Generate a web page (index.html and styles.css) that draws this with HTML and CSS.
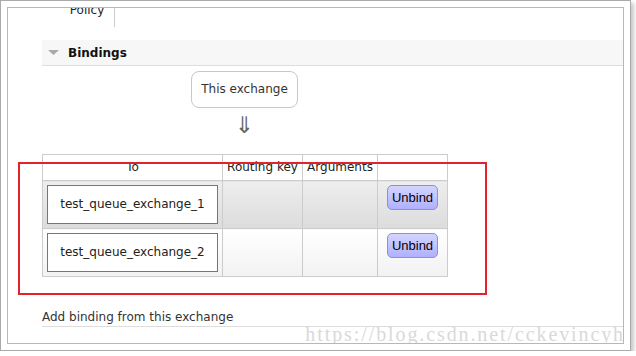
FILE: index.html
```html
<!DOCTYPE html>
<html lang="en">
<head>
    <meta charset="UTF-8">
    <title>Exchange bindings</title>
    <link rel="stylesheet" href="styles.css">
</head>
<body>
    <div class="shot">
        <div class="window">
            <div class="tab">Policy</div>

            <div class="section">
                <h2 class="section-head">
                    <svg class="toggle" width="11" height="5" viewBox="0 0 11 5"><polygon points="0,0 11,0 5.5,5" fill="#aaa"/></svg>
                    Bindings
                </h2>

                <div class="bindings">
                    <div class="diagram">
                        <span class="node">This exchange</span>
                        <span class="arrow">⇓</span>
                    </div>

                    <table class="list">
                        <colgroup>
                            <col class="col-to">
                            <col class="col-key">
                            <col class="col-args">
                            <col class="col-act">
                        </colgroup>
                        <thead>
                            <tr>
                                <th>To</th>
                                <th>Routing key</th>
                                <th>Arguments</th>
                                <th></th>
                            </tr>
                        </thead>
                        <tbody>
                            <tr class="alt1">
                                <td><span class="queue">test_queue_exchange_1</span></td>
                                <td></td>
                                <td></td>
                                <td class="action"><button class="unbind">Unbind</button></td>
                            </tr>
                            <tr class="alt2">
                                <td><span class="queue">test_queue_exchange_2</span></td>
                                <td></td>
                                <td></td>
                                <td class="action"><button class="unbind">Unbind</button></td>
                            </tr>
                        </tbody>
                    </table>
                </div>

                <h3 class="add-binding">Add binding from this exchange</h3>
            </div>

            <!-- annotation drawn over the screenshot -->
            <div class="mark"></div>
            <div class="watermark">https://blog.csdn.net/cckevincyh</div>
        </div>
    </div>
</body>
</html>
```

FILE: styles.css
```css
body {
    margin: 0;
    background: #fff;
    font-family: 'DejaVu Sans', Verdana, sans-serif;
    font-size: 12px;
    color: #222;
}
.shot {
    width: 617px;
    height: 337px;
    padding: 6px;
    border: 1px solid #aaa;
    box-shadow: 3px 3px 4px rgba(0, 0, 0, 0.22);
}
.window {
    position: relative;
    box-sizing: border-box;
    width: 100%;
    height: 100%;
    border: 1px solid #b8b8b8;
    overflow: hidden;
}
.tab {
    margin: -6px 0 0 52px;
    width: 54px;
    height: 25px;
    border-right: 1px solid #ccc;
    text-align: center;
    line-height: 16px;
}
.section {
    margin: 13px 0 0 34px;
}
.section-head {
    display: flex;
    align-items: center;
    gap: 9px;
    margin: 0;
    height: 25px;
    padding-left: 6px;
    background: #f7f7f7;
    border-bottom: 1px solid #ddd;
    font-size: 12px;
    font-weight: bold;
    color: #111;
}
.bindings {
    width: 405px;
}
.diagram {
    display: flex;
    flex-direction: column;
    align-items: center;
    padding-top: 5px;
}
.node {
    border: 1px solid #c8c8c8;
    border-radius: 8px;
    padding: 10px 9px;
    line-height: 15px;
    color: #333;
}
.arrow {
    margin-top: 5px;
    font-size: 23px;
    line-height: 24px;
    color: #666;
}
.list {
    margin-top: 17px;
    width: 405px;
    table-layout: fixed;
    border-collapse: collapse;
}
.col-to { width: 180px; }
.col-key { width: 80px; }
.col-args { width: 75px; }
.col-act { width: 70px; }
.list th,
.list td {
    border: 1px solid #ccc;
    padding: 4px;
}
.list th {
    font-weight: normal;
    line-height: 17px;
    background: #fff;
    text-align: center;
    white-space: nowrap;
}
.list td {
    vertical-align: top;
}
.list tr.alt1 td {
    background: linear-gradient(#eee, #dcdcdc);
}
.list tr.alt2 td {
    background: linear-gradient(#fff, #f2f2f2);
}
.queue {
    display: block;
    border: 1px solid #777;
    background: #fff;
    padding: 10px 0;
    line-height: 17px;
    text-align: center;
}
.action {
    text-align: center;
}
.unbind {
    font-family: 'Liberation Sans', Arial, sans-serif;
    font-size: 13px;
    line-height: 15px;
    padding: 4px;
    border: 1px solid #8d8de8;
    border-radius: 5px;
    background: linear-gradient(#d4d4ff, #b0b0ff);
    color: #000;
}
.add-binding {
    margin: 32px 0 0;
    padding-bottom: 1px;
    border-bottom: 1px solid #ddd;
    font-size: 12px;
    font-weight: normal;
    line-height: 16px;
    color: #333;
}
.mark {
    position: absolute;
    left: 10px;
    top: 154px;
    width: 469px;
    height: 133px;
    box-sizing: border-box;
    border: 2px solid #e4222c;
}
.watermark {
    position: absolute;
    right: -2px;
    bottom: -1px;
    font-family: 'Liberation Serif', serif;
    font-size: 20px;
    line-height: 20px;
    letter-spacing: 1.9px;
    color: #d9d9d9;
}
```
